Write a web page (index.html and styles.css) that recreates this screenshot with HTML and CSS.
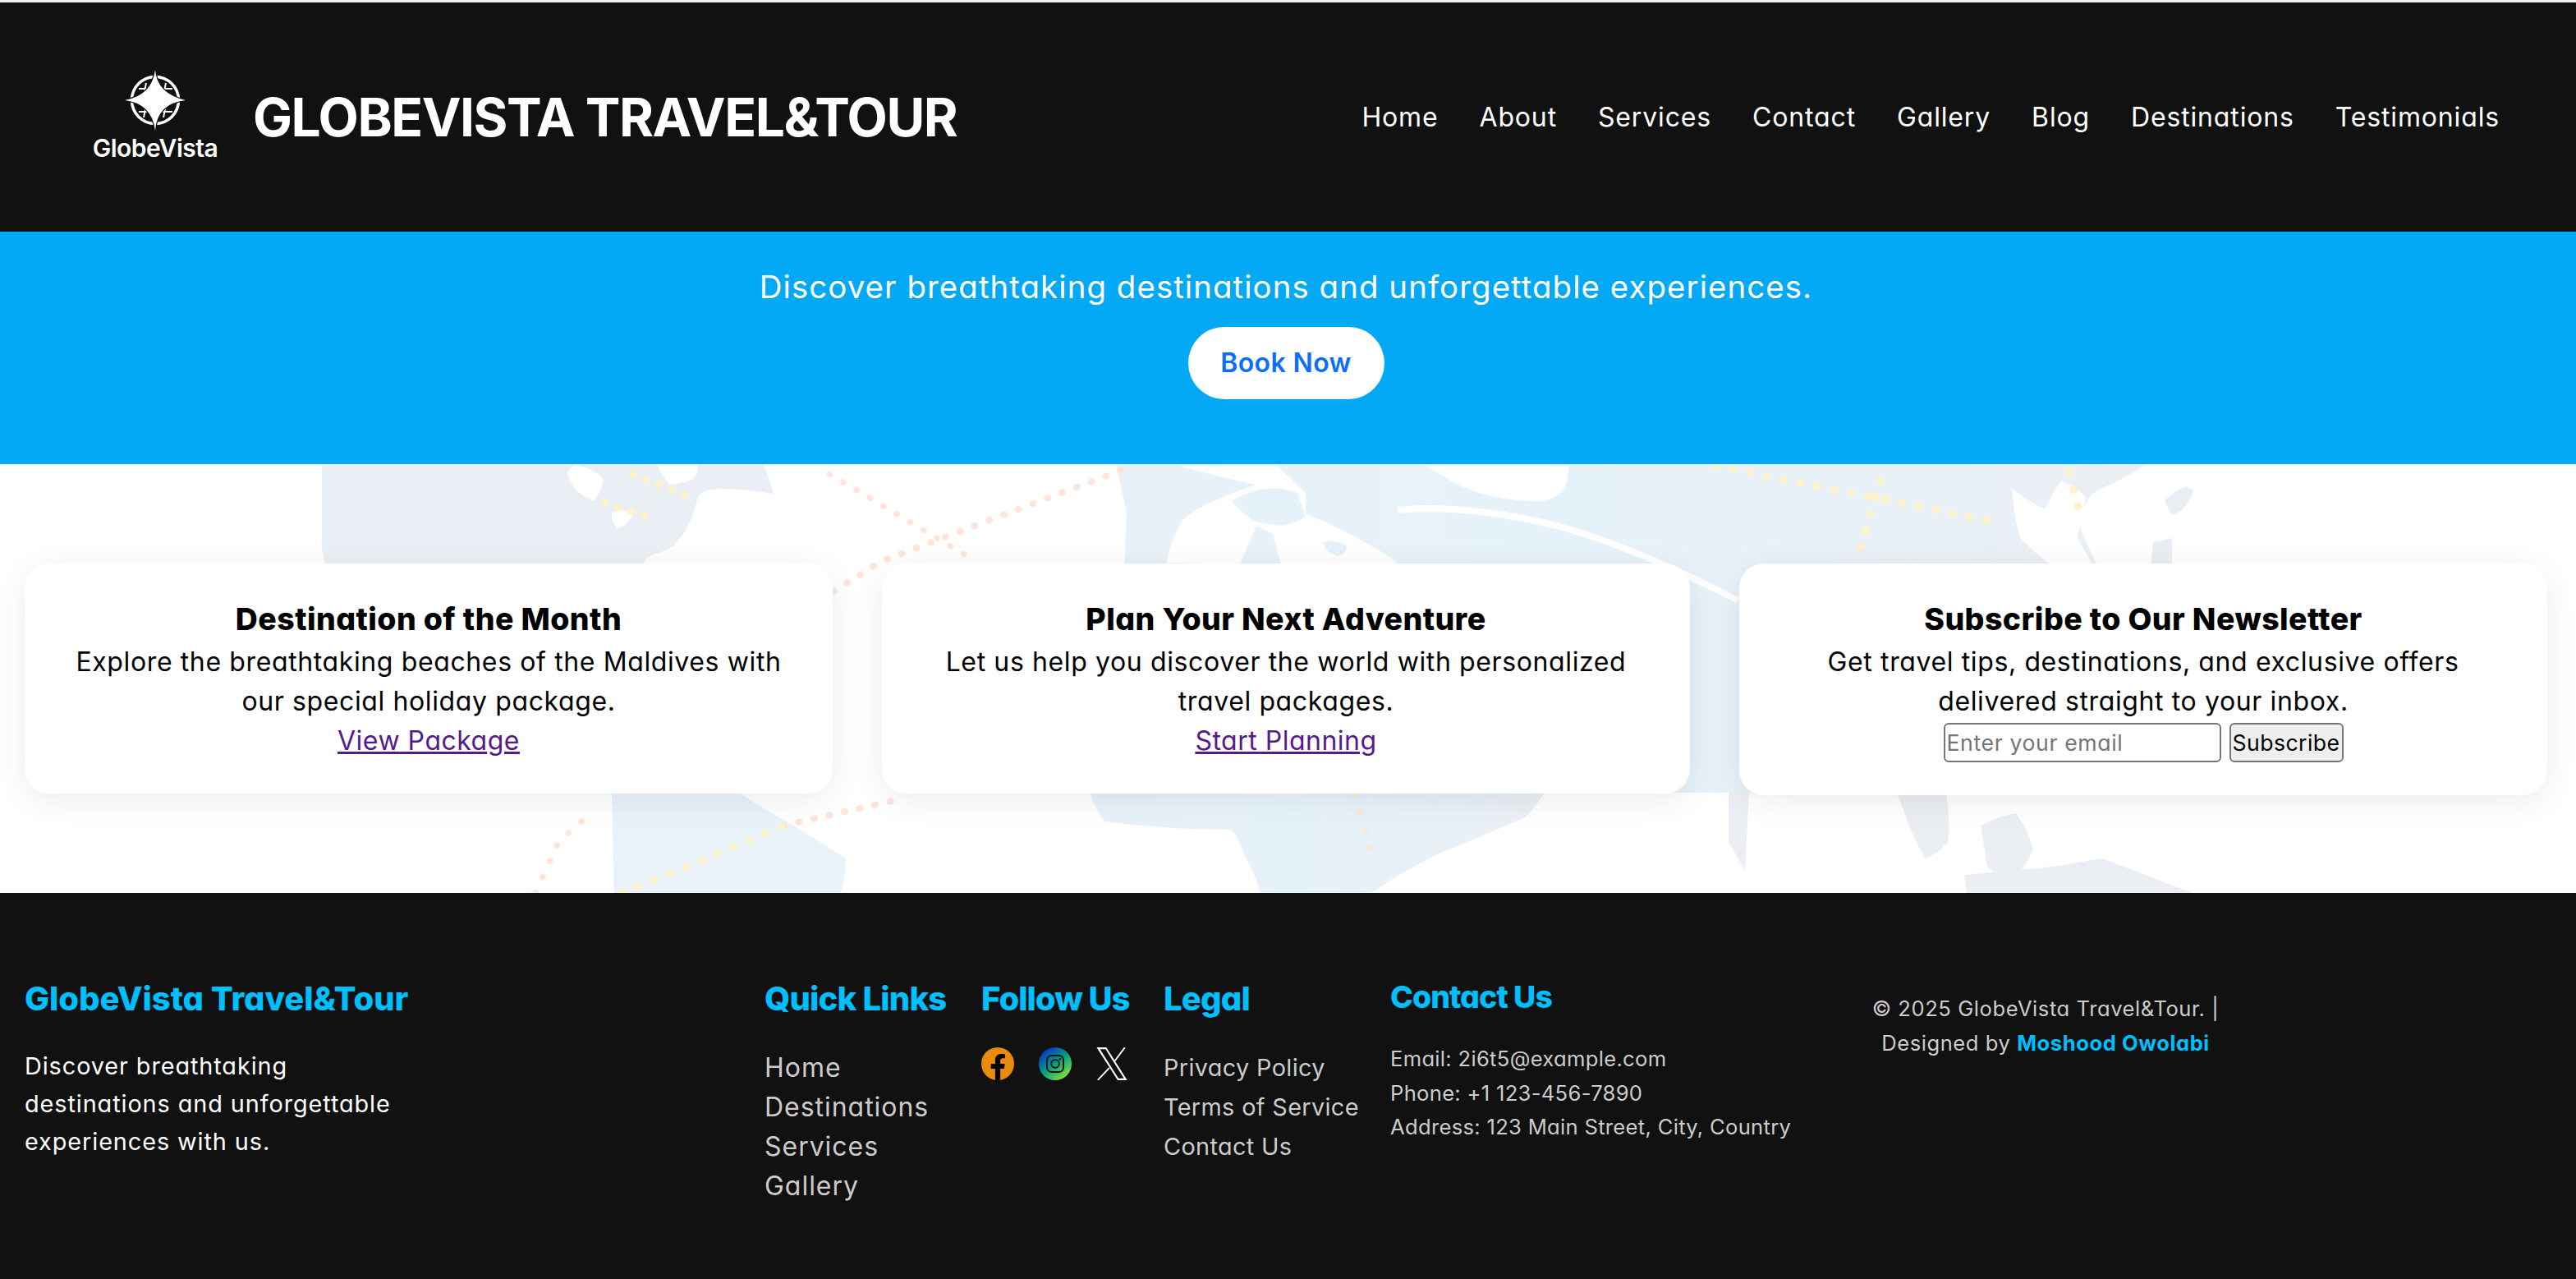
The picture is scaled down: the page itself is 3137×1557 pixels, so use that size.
FILE: index.html
```html
<!DOCTYPE html>
<html lang="en">
<head>
    <meta charset="UTF-8">
    <meta name="viewport" content="width=device-width, initial-scale=1.0">
    <title>GlobeVista Travel&amp;Tour</title>
    <link rel="stylesheet" href="styles.css">
</head>
<body>
    <header class="site-header">
        <div class="brand">
            <div class="logo">
                <svg class="logo-mark" viewBox="0 0 80 80" width="80" height="80">
                    <circle cx="40" cy="40" r="28.5" fill="none" stroke="#fff" stroke-width="3.5"/>
                    <g stroke="#fff" stroke-width="2" fill="none">
                        <path d="M20 26h14M29 19l-3 15M46 26h15M53 19l-3 15M20 54h14M29 46l-3 15M46 54h15M53 46l-3 15"/>
                    </g>
                    <path d="M40 3Q42 32 77 40 42 44 40 77 36 44 3 40 36 34 40 3Z" fill="#fff" stroke="#111" stroke-width="2.5" paint-order="stroke"/>
                </svg>
                <span class="logo-text">GlobeVista</span>
            </div>
            <h1>GLOBEVISTA TRAVEL&amp;TOUR</h1>
        </div>
        <nav class="main-nav">
            <a href="#">Home</a>
            <a href="#">About</a>
            <a href="#">Services</a>
            <a href="#">Contact</a>
            <a href="#">Gallery</a>
            <a href="#">Blog</a>
            <a href="#">Destinations</a>
            <a href="#">Testimonials</a>
        </nav>
    </header>

    <section class="hero">
        <p>Discover breathtaking destinations and unforgettable experiences.</p>
        <a class="book-btn" href="#">Book Now</a>
    </section>

    <main class="highlights">
        <!-- faint world map behind the cards -->
        <svg class="world-map" viewBox="0 0 3137 522" width="3137" height="522" aria-hidden="true">
            <defs>
                <linearGradient id="landMid" x1="0" x2="1" y1="0" y2="0">
                    <stop offset="0" stop-color="#e8f1f8"/>
                    <stop offset="0.45" stop-color="#e6f2f9"/>
                    <stop offset="0.7" stop-color="#e8f1f7"/>
                    <stop offset="1" stop-color="#ebeff4"/>
                </linearGradient>
            </defs>
            <!-- north america -->
            <path fill="#e9eff5" d="M392 0H930Q938 20 942 36 905 30 880 30 855 30 850 40 845 60 838 75 830 90 820 100 805 108 795 110 785 115 780 125H398Q390 105 392 90Z"/>
            <path fill="#fff" d="M700 0Q730 8 735 20 730 38 722 45 708 38 700 30 692 18 690 10ZM800 0H850Q850 12 845 18 830 24 815 25 805 12 800 0ZM745 60Q760 52 770 62 765 75 752 78 744 70 745 60Z"/>
            <!-- centre landmass -->
            <path fill="url(#landMid)" d="M1359 0H2615Q2590 15 2570 25 2550 32 2545 40 2535 55 2530 70 2542 100 2555 125V400H1359L1372 60Z"/>
            <path fill="#fff" d="M1420 120Q1430 80 1443 65 1470 45 1530 25 1480 15 1436 2H1555L1590 35 1590 60Q1650 85 1700 118L1700 122H1560L1550 85 1530 75 1510 122Z"/>
            <path fill="#e6f2f9" d="M1500 45Q1540 20 1580 35L1590 65Q1575 72 1560 75 1545 74 1530 70 1512 60 1500 45Z"/>
            <path fill="#e6f2f9" d="M1611 95Q1625 90 1640 100 1640 110 1628 112 1615 108 1611 95Z"/>
            <path fill="#fff" d="M1737 2H1910Q1910 18 1905 30 1895 42 1880 45 1850 46 1820 40 1795 34 1775 25 1755 14 1737 2Z"/>
            <path fill="#fff" d="M2450 30Q2470 45 2490 55 2500 35 2510 20 2528 28 2540 40 2535 65 2530 90 2540 108 2550 125H2500Q2478 108 2460 90 2452 60 2450 30Z"/>
            <path fill="#e8eef4" d="M2636 45Q2660 20 2671 32 2665 55 2645 62ZM2622 95 2645 90 2645 125H2619Z"/>
            <path fill="none" stroke="#fff" stroke-width="8" d="M1702 56Q1780 48 1892 74 1990 100 2116 166"/>
            <!-- south america and africa below the cards -->
            <path fill="#e9f2f9" d="M745 400H900Q930 420 960 436 995 458 1030 480 1030 500 1024 522H748Z"/>
            <path fill="url(#landMid)" d="M1327 400H1881Q1870 418 1857 430 1800 455 1750 475 1705 498 1670 522H1535Q1528 498 1515 475 1510 458 1500 445 1420 445 1345 435 1333 418 1327 400Z"/>
            <!-- asia and australia below the third card -->
            <path fill="#ebeff4" d="M2310 400H2370Q2375 430 2372 460 2360 474 2345 480 2332 460 2325 440ZM2412 440Q2435 428 2455 425 2470 445 2476 470 2465 492 2450 510 2432 502 2420 490ZM2392 500 2500 490 2560 480 2670 522H2395ZM2105 400H2130L2125 495 2105 460Z"/>
            <!-- routes -->
            <g fill="none" stroke-linecap="round">
                <path stroke="#fde6d9" stroke-width="8" stroke-dasharray="1 18" d="M1015 155 1074 118 1380 2"/>
                <path stroke="#fde6d9" stroke-width="7" stroke-dasharray="1 18" d="M1010 12 1183 115"/>
                <path stroke="#fde6d9" stroke-width="7" stroke-dasharray="1 20" d="M652 522 680 460 715 429"/>
                <path stroke="#fde6d9" stroke-width="8" stroke-dasharray="1 18" d="M954 440 1100 407"/>
                <path stroke="#fdf2c8" stroke-width="9" stroke-dasharray="1 20" d="M757 522 860 480 954 440"/>
                <path stroke="#fdf2c8" stroke-width="9" stroke-dasharray="1 20" d="M2089 2 2433 71"/>
                <path stroke="#fdf2c8" stroke-width="9" stroke-dasharray="1 20" d="M2290 20 2260 120M2520 10 2535 70"/>
                <path stroke="#fdf2c8" stroke-width="9" stroke-dasharray="1 16" d="M736 47 800 67M770 12 840 40"/>
                <path stroke="#fde9c8" stroke-width="6" stroke-dasharray="1 22" d="M1650 401 1670 470"/>
            </g>
        </svg>

        <div class="card">
            <h3>Destination of the Month</h3>
            <p>Explore the breathtaking beaches of the Maldives with<br>our special holiday package.</p>
            <a href="#">View Package</a>
        </div>
        <div class="card">
            <h3>Plan Your Next Adventure</h3>
            <p>Let us help you discover the world with personalized<br>travel packages.</p>
            <a href="#">Start Planning</a>
        </div>
        <div class="card">
            <h3>Subscribe to Our Newsletter</h3>
            <p>Get travel tips, destinations, and exclusive offers<br>delivered straight to your inbox.</p>
            <form class="subscribe">
                <input type="email" placeholder="Enter your email">
                <button type="button">Subscribe</button>
            </form>
        </div>
    </main>

    <footer class="site-footer">
        <div class="col col-about">
            <h3>GlobeVista Travel&amp;Tour</h3>
            <p>Discover breathtaking<br>destinations and unforgettable<br>experiences with us.</p>
        </div>
        <div class="col col-links">
            <h3>Quick Links</h3>
            <ul>
                <li><a href="#">Home</a></li>
                <li><a href="#">Destinations</a></li>
                <li><a href="#">Services</a></li>
                <li><a href="#">Gallery</a></li>
            </ul>
        </div>
        <div class="col col-social">
            <h3>Follow Us</h3>
            <div class="social-icons">
                <svg viewBox="0 0 24 24" width="40" height="40">
                    <defs><clipPath id="fbClip"><circle cx="12" cy="12" r="12"/></clipPath></defs>
                    <circle cx="12" cy="12" r="12" fill="#e98a0c"/>
                    <path clip-path="url(#fbClip)" fill="#000" d="M10.125 24v-8.46H7.078v-3.47h3.047V9.43c0-3.007 1.792-4.669 4.533-4.669 1.312 0 2.686.235 2.686.235v2.953H15.83c-1.491 0-1.956.925-1.956 1.874v2.25h3.328l-.532 3.47h-2.796V24z"/>
                </svg>
                <svg viewBox="0 0 24 24" width="40" height="40">
                    <defs>
                        <linearGradient id="igGrad" x1="0.15" y1="0.05" x2="0.85" y2="0.95">
                            <stop offset="0" stop-color="#0030d0"/>
                            <stop offset="0.5" stop-color="#03a07c"/>
                            <stop offset="1" stop-color="#8ee23a"/>
                        </linearGradient>
                    </defs>
                    <circle cx="12" cy="12" r="12" fill="url(#igGrad)"/>
                    <rect x="6" y="6" width="12" height="12" rx="3.2" fill="none" stroke="#111" stroke-width="1.1"/>
                    <circle cx="12" cy="12" r="2.9" fill="none" stroke="#111" stroke-width="1.1"/>
                    <circle cx="15.5" cy="8.5" r="0.75" fill="#111"/>
                </svg>
                <svg viewBox="1 2.25 22 19.5" width="38" height="40" preserveAspectRatio="none">
                    <path fill="#fff" fill-rule="evenodd" d="M1.25 2.25H8.1L22.8 21.75H16.1ZM3.6 3.35 16.65 20.65H20.5L7.55 3.35Z"/>
                    <path stroke="#fff" stroke-width="1" fill="none" d="M21.2 2.25 13.7 10.7M10.2 14.4 2 21.75"/>
                </svg>
            </div>
        </div>
        <div class="col col-legal">
            <h3>Legal</h3>
            <ul>
                <li><a href="#">Privacy Policy</a></li>
                <li><a href="#">Terms of Service</a></li>
                <li><a href="#">Contact Us</a></li>
            </ul>
        </div>
        <div class="col col-contact">
            <h3>Contact Us</h3>
            <p>Email: 2i6t5@example.com</p>
            <p>Phone: +1 123-456-7890</p>
            <p>Address: 123 Main Street, City, Country</p>
        </div>
        <div class="col col-copy">
            <p>© 2025 GlobeVista Travel&amp;Tour. |<br>Designed by <strong>Moshood Owolabi</strong></p>
        </div>
    </footer>
</body>
</html>
```

FILE: styles.css
```css
* {
    box-sizing: border-box;
}
body {
    margin: 0;
    background: #f1f1f1;
    font-family: Inter, 'Noto Sans', sans-serif;
    font-feature-settings: "cv11";
    color: #000;
}

/* header */
.site-header {
    margin-top: 3px;
    height: 279px;
    background: #111;
    color: #fff;
    display: flex;
    align-items: center;
    justify-content: space-between;
    padding: 0 93px 0 104px;
}
.brand {
    display: flex;
    align-items: center;
    gap: 34px;
}
.logo {
    width: 170px;
    margin-top: -6px;
    display: flex;
    flex-direction: column;
    align-items: center;
}
.logo-mark {
    display: block;
}
.logo-text {
    font-size: 30px;
    font-weight: 600;
    letter-spacing: -0.5px;
    line-height: 36px;
    font-feature-settings: normal;
}
.site-header h1 {
    margin: 0;
    font-size: 64px;
    font-weight: 700;
    letter-spacing: -1.44px;
    line-height: 96px;
}
.main-nav {
    display: flex;
    gap: 50px;
}
.main-nav a {
    color: #fff;
    text-decoration: none;
    font-size: 32px;
    line-height: 48px;
    letter-spacing: 0.85px;
}

/* hero */
.hero {
    height: 283px;
    background: #03a9f4;
    color: #fff;
    text-align: center;
    padding: 39px 5px 0 0;
}
.hero p {
    margin: 0 0 19px;
    font-size: 38.4px;
    line-height: 57.6px;
    letter-spacing: 1.07px;
}
.book-btn {
    display: inline-block;
    width: 239px;
    height: 88px;
    line-height: 88px;
    border-radius: 50px;
    background: #fff;
    color: #0d6efd;
    text-decoration: none;
    font-size: 32px;
    font-weight: 600;
    letter-spacing: 0.4px;
}

/* cards */
.highlights {
    position: relative;
    background: #fff;
    display: flex;
    align-items: flex-start;
    gap: 60px;
    padding: 121px 35px 119px 30px;
    overflow: hidden;
}
.world-map {
    position: absolute;
    top: 0;
    left: 0;
}
.card {
    position: relative;
    flex: 1;
    background: #fff;
    border-radius: 30px;
    padding: 40px;
    text-align: center;
    box-shadow: 0 8px 40px rgba(0,0,0,0.08);
    font-size: 32px;
    line-height: 48px;
}
.card h3 {
    margin: 0;
    font-size: 37.44px;
    line-height: 56px;
    font-weight: 800;
    letter-spacing: 0.45px;
}
.card p {
    margin: 0;
    letter-spacing: 0.62px;
}
.card a {
    color: #551a8b;
    letter-spacing: 0.5px;
}
.subscribe {
    display: flex;
    justify-content: center;
    gap: 10px;
    padding-top: 2px;
}
.subscribe input,
.subscribe button {
    height: 48px;
    font-family: inherit;
    font-feature-settings: inherit;
    font-size: 26.67px;
    border: 2px solid #767676;
    border-radius: 6px;
}
.subscribe input {
    width: 338px;
    background: #fff;
    padding: 0 2px;
    letter-spacing: 0.6px;
}
.subscribe button {
    width: 139px;
    background: #efefef;
    color: #000;
    padding: 0;
    letter-spacing: 0.4px;
}

/* footer */
.site-footer {
    height: 470px;
    background: #111;
    color: #ccc;
    display: grid;
    grid-template-columns: 901px 264px 222px 276px 558px 480px;
    padding: 84px 0 0 30px;
}
.col h3 {
    margin: 0;
    color: #00bfff;
    font-size: 40px;
    line-height: 60px;
    font-weight: 800;
}
.col ul {
    list-style: none;
    margin: 0;
    padding: 0;
}
.col a {
    color: #ccc;
    text-decoration: none;
}
.col-about {
    padding-top: 15px;
    color: #fff;
}
.col-about h3 {
    letter-spacing: -0.06px;
}
.col-about p {
    margin: 29px 0 0;
    font-size: 28.8px;
    line-height: 46px;
    letter-spacing: 0.93px;
}
.col-links,
.col-social,
.col-legal {
    padding-top: 15px;
}
.col-links h3 {
    letter-spacing: -0.8px;
}
.col-links ul {
    margin-top: 30px;
    font-size: 32px;
    line-height: 48px;
    letter-spacing: 0.97px;
}
.col-social h3 {
    letter-spacing: -1px;
}
.social-icons {
    display: flex;
    gap: 30px;
    margin-top: 29px;
}
.col-legal h3 {
    letter-spacing: -0.8px;
}
.col-legal ul {
    margin-top: 30px;
    font-size: 28.8px;
    line-height: 48px;
    letter-spacing: 0.37px;
}
.col-contact {
    padding-top: 15px;
}
.col-contact h3 {
    font-size: 37.44px;
    line-height: 56px;
    margin-bottom: 26px;
    letter-spacing: -0.9px;
}
.col-contact p {
    margin: 0;
    font-size: 25.6px;
    line-height: 41.6px;
    letter-spacing: 0.3px;
}
.col-copy {
    padding-top: 36px;
    text-align: center;
    font-size: 25.6px;
    line-height: 42px;
    letter-spacing: 0.55px;
}
.col-copy p {
    margin: 0;
}
.col-copy strong {
    color: #00bfff;
    font-weight: 700;
}
```
